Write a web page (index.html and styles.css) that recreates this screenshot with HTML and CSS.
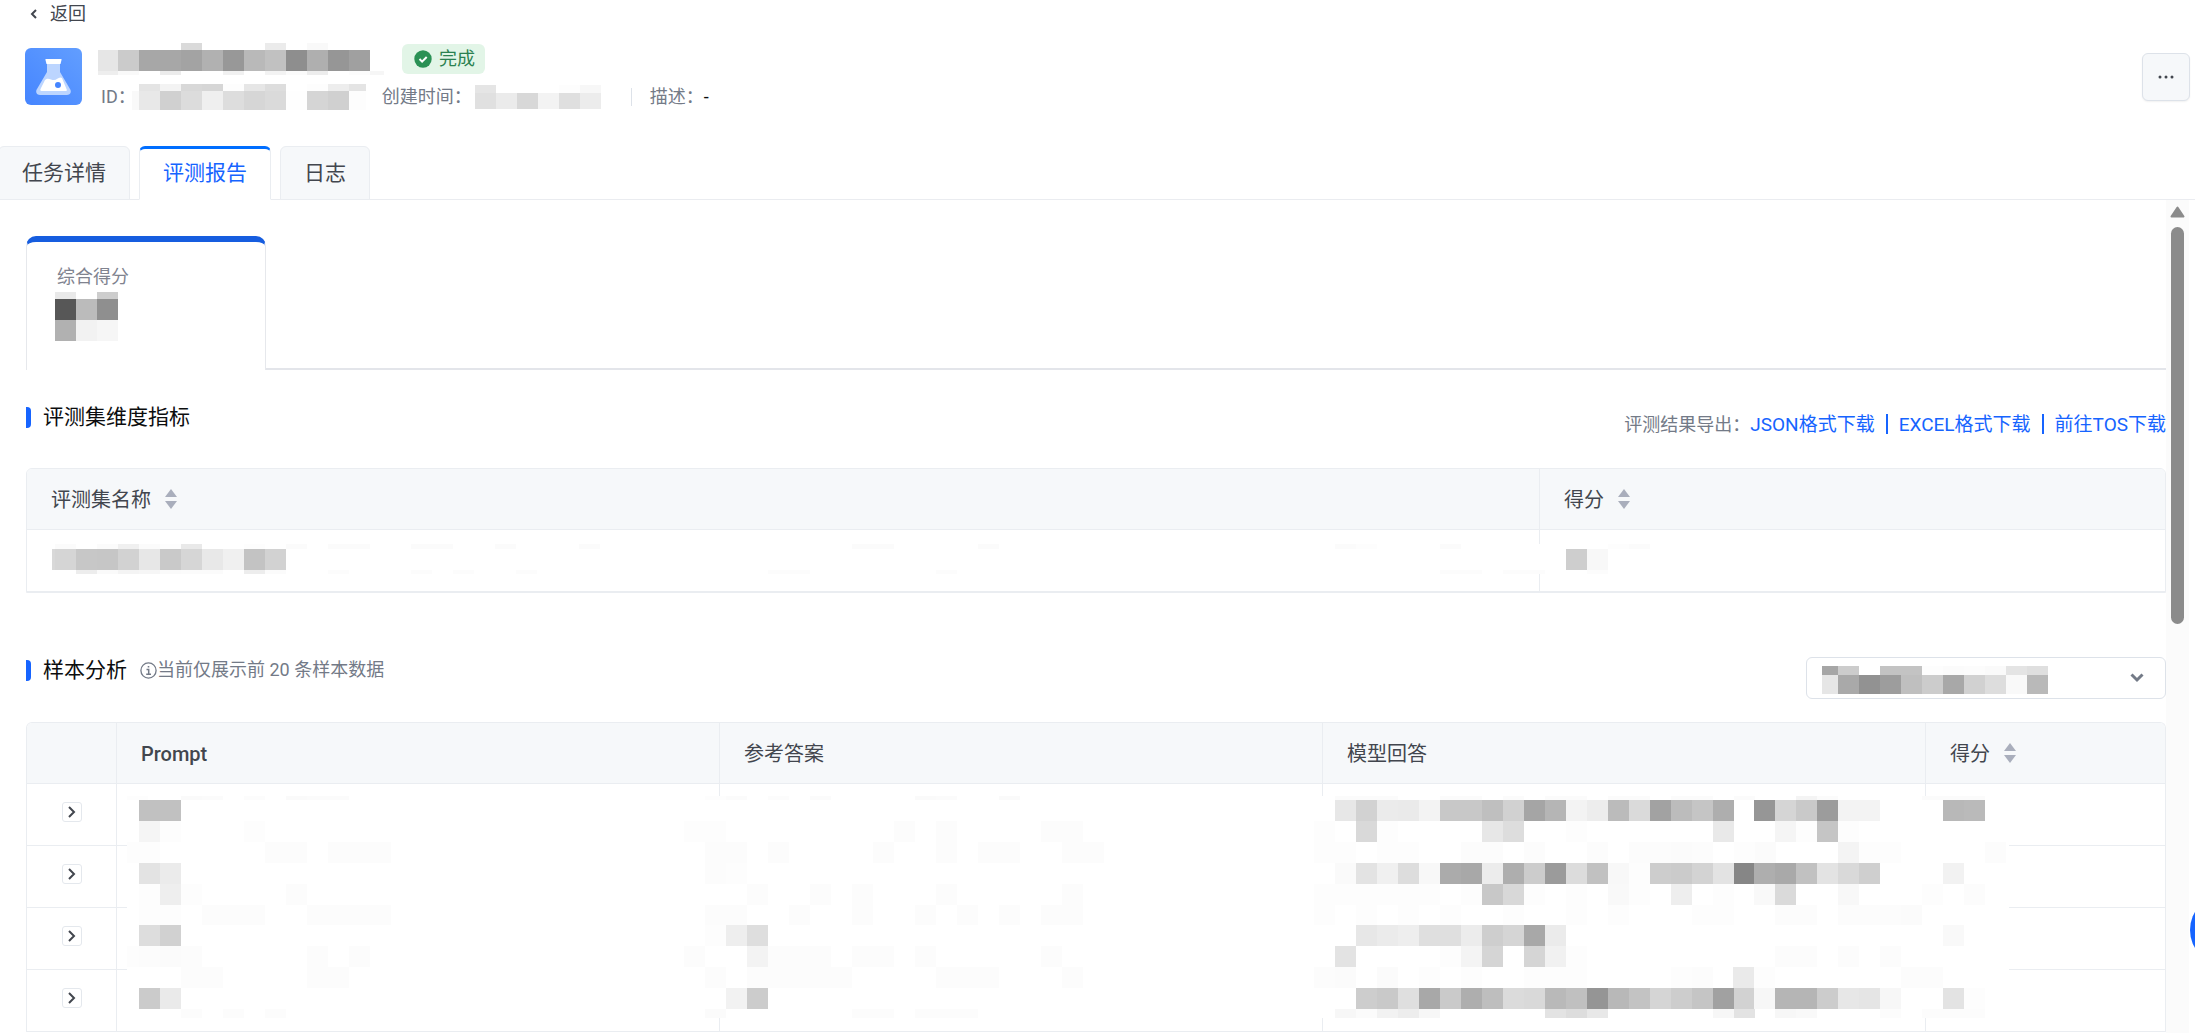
FILE: index.html
```
<!DOCTYPE html>
<html lang="zh-CN">
<head>
    <meta charset="UTF-8">
    <meta name="viewport" content="width=device-width, initial-scale=1.0">
    <title>评测报告</title>
    <link rel="stylesheet" href="styles.css">
</head>
<body>

    <header class="header">
        <a class="back" href="#">
            <svg width="16" height="16" viewBox="0 0 16 16"><path d="M10 4L6 8l4 4" fill="none" stroke="currentColor" stroke-width="2"/></svg>
            返回
        </a>
        <div class="task">
            <svg class="task-icon" viewBox="0 0 57 57">
                <defs>
                    <linearGradient id="iconBg" x1="1" y1="0" x2="0" y2="1">
                        <stop offset="0" stop-color="#629eff"/>
                        <stop offset="1" stop-color="#4585ff"/>
                    </linearGradient>
                </defs>
                <rect width="57" height="57" rx="6" fill="url(#iconBg)"/>
                <path d="M22 15h13v9l10 17c2 3 0 6-3 6H15c-3 0-5-3-3-6l10-17z" fill="#bcd5ff"/>
                <path d="M20.500 11h16v1l-1 4h-14l-1-4z" fill="#fff"/>
                <path d="M20 32c3-3 6 0 9 0s5-4 8-2l4.500 11c1 1.500 0 2-1 2h-24c-1 0-1.500-1-1-2z" fill="#fff"/>
                <circle cx="33" cy="37" r="3" fill="#4585ff"/>
            </svg>
            <div class="task-info">
                <div class="task-title">
                    <svg class="mosaic" data-name="title" width="286" height="32" viewBox="98 42 286 32"></svg>
                    <span class="badge">
                        <svg width="18" height="18" viewBox="0 0 18 18"><circle cx="9" cy="9" r="8.700" fill="#2b9155"/><path d="M5.500 9l2.600 2.600 4.600-4.600" fill="none" stroke="#fff" stroke-width="2"/></svg>
                        完成
                    </span>
                </div>
                <div class="task-meta">
                    <span>ID：</span>
                    <svg class="mosaic id-value" data-name="id" width="234" height="26" viewBox="132 84 234 26"></svg>
                    <span>创建时间：</span>
                    <svg class="mosaic time-value" data-name="time" width="126" height="24" viewBox="474 83 126 24"></svg>
                    <span class="meta-line"></span>
                    <span>描述：</span>
                    <span class="meta-dash">-</span>
                </div>
            </div>
            <button class="more" type="button" aria-label="更多">
                <svg width="16" height="4" viewBox="0 0 16 4"><circle cx="2" cy="2" r="1.500"/><circle cx="8" cy="2" r="1.500"/><circle cx="14" cy="2" r="1.500"/></svg>
            </button>
        </div>
        <nav class="tabs">
            <a class="tab" href="#">任务详情</a>
            <a class="tab active" href="#">评测报告</a>
            <a class="tab" href="#">日志</a>
        </nav>
    </header>

    <div class="page">
        <main class="content">
            <div class="score-tabs">
                <div class="score-card">
                    <p>综合得分</p>
                    <svg class="mosaic" data-name="score" width="63" height="49" viewBox="55 292 63 49"></svg>
                </div>
            </div>

            <section class="section">
                <h2>评测集维度指标</h2>
                <div class="export">
                    <span>评测结果导出：</span>
                    <a href="#">JSON格式下载</a>
                    <a href="#">EXCEL格式下载</a>
                    <a href="#">前往TOS下载</a>
                </div>
            </section>

            <div class="table-box">
                <table class="table dataset-table">
                    <thead>
                        <tr>
                            <th>评测集名称 <svg class="sort" viewBox="0 0 12 20"><path d="M6 0l6 8H0zM6 20l6-8H0z"/></svg></th>
                            <th class="dataset-score">得分 <svg class="sort" viewBox="0 0 12 20"><path d="M6 0l6 8H0zM6 20l6-8H0z"/></svg></th>
                        </tr>
                    </thead>
                    <tbody>
                        <tr><td></td><td></td></tr>
                    </tbody>
                </table>
                <svg class="mosaic mosaic-dataset" data-name="dataset" width="1600" height="30" viewBox="52 545 1600 30"></svg>
            </div>

            <section class="section section-samples">
                <h2>样本分析</h2>
                <p class="tip">
                    <svg width="17" height="17" viewBox="0 0 17 17" fill="none" stroke="currentColor"><circle cx="8.500" cy="8.500" r="7.600" stroke-width="1.300"/><path d="M6.500 7.500h2.200v4.500M6.200 12.300h4.800M7.700 4.800h1.600" stroke-width="1.500"/></svg>当前仅展示前 20 条样本数据
                </p>
                <div class="picker">
                    <select aria-label="评测集"><option></option></select>
                    <svg class="mosaic picker-value" data-name="picker" width="226" height="28" viewBox="1822 666 226 28"></svg>
                    <svg class="picker-arrow" width="14" height="10" viewBox="0 0 14 10"><path d="M1.500 1.500L7 7l5.500-5.500" fill="none" stroke="#737a87" stroke-width="3"/></svg>
                </div>
            </section>

            <div class="table-box">
                <table class="table sample-table">
                    <thead>
                        <tr>
                            <th class="col-expand"></th>
                            <th class="latin">Prompt</th>
                            <th>参考答案</th>
                            <th>模型回答</th>
                            <th class="col-score">得分 <svg class="sort" viewBox="0 0 12 20"><path d="M6 0l6 8H0zM6 20l6-8H0z"/></svg></th>
                        </tr>
                    </thead>
                    <tbody>
                        <tr><td><button class="expand" type="button" aria-label="展开"><svg viewBox="0 0 8 12"><path d="M1 1l5 5-5 5"/></svg></button></td><td></td><td></td><td></td><td></td></tr>
                        <tr><td><button class="expand" type="button" aria-label="展开"><svg viewBox="0 0 8 12"><path d="M1 1l5 5-5 5"/></svg></button></td><td></td><td></td><td></td><td></td></tr>
                        <tr><td><button class="expand" type="button" aria-label="展开"><svg viewBox="0 0 8 12"><path d="M1 1l5 5-5 5"/></svg></button></td><td></td><td></td><td></td><td></td></tr>
                        <tr><td><button class="expand" type="button" aria-label="展开"><svg viewBox="0 0 8 12"><path d="M1 1l5 5-5 5"/></svg></button></td><td></td><td></td><td></td><td></td></tr>
                    </tbody>
                </table>
                <svg class="mosaic mosaic-samples" data-name="samples" width="1882" height="222" viewBox="127 796 1882 222"></svg>
            </div>
        </main>

        <div class="scrollbar">
            <svg width="15" height="12" viewBox="0 0 15 12"><path d="M7.500 1.500L13.500 10.500H1.500z" fill="#8b8b8b" stroke="#8b8b8b" stroke-width="2" stroke-linejoin="round"/></svg>
            <div class="thumb"></div>
        </div>
    </div>

    <button class="float-btn" type="button" aria-label="帮助"></button>

    <script src="mosaic.js"></script>
</body>
</html>
```
FILE: mosaic.js
```
// Строка мозаики: [y, высота, {x: 'серые клетки по два hex-знака, -- пусто'}]
const CELL = 21;
const mosaics = {
    title: [
        [42, 7, {181: 'da', 265: 'eb', 307: 'f9'}],
        [49, 21, {97: 'e6cba7a7a3b198b9c18eaf96a0'}],
        [70, 4, {97: 'eef9--ec----f1--f3fbed--fcf6'}]
    ],
    id: [
        [84, 7, {139: 'e4f3d8d6fde6dd', 307: 'fdede4'}],
        [91, 19, {118: 'f9e8d0dcefddd6dafe', 307: 'd5d0fd'}]
    ],
    time: [
        [83, 8, {474: 'e5', 558: 'fdf7'}],
        [91, 16, {474: 'e0ebd8f3dfec'}]
    ],
    score: [
        [292, 7, {55: 'e9--cd'}],
        [299, 21, {55: '57bb8f'}],
        [320, 21, {55: 'b1f2f6'}]
    ],
    dataset: [
        [545, 5, {55: 'fb--fbf0fbfde9', 244: 'fd', 286: 'fb', 328: 'fbfb', 411: 'fbfb', 495: 'fb', 579: 'fb', 852: 'fbfb', 978: 'fb', 1335: 'fbfd', 1440: 'fb', 1608: 'fdfb'}],
        [550, 21, {34: 'd8d5c7c6d2e7c9d6e8f0c3d2', 1566: 'cef8'}],
        [571, 4, {76: 'edfaf4f6fafbfb--edfb', 328: 'fc', 411: 'fc', 453: 'fc', 516: 'fc', 768: 'fcfc', 936: 'fc', 1440: 'fcfc', 1503: 'fcfc', 1587: 'fc'}]
    ],
    picker: [
        [666, 9, {1817: 'a6cc--c3c3fdfbfcfae4df'}],
        [675, 19, {1817: 'e6a9929dbfcca8d1ddf9b9'}]
    ],
    samples: [
        [796, 4, {127: 'fd', 181: 'fafb', 244: 'fc', 286: 'fafbfb', 705: 'fdfb', 768: 'fc', 810: 'fb', 915: 'fafb', 999: 'fa', 1335: 'fbfbfb', 1440: 'fbfb', 1503: 'fb', 1545: 'fbfb', 1608: 'fbfb--fbfb--fb', 1796: 'f4fb', 1922: 'fbfbfb'}],
        [800, 21, {139: 'c1c1', 1335: 'e7d2ebeaf3c8c8bfd1a5b5f3edbbdaa2bcc5ae', 1754: '96d5c99cf3f3', 1943: 'b8ba'}],
        [821, 21, {139: 'f5fd', 244: 'fd', 684: 'fdfd', 894: 'fc', 936: 'fc', 1041: 'fcfc', 1314: 'fd', 1356: 'd9fd', 1482: 'e7dd', 1566: 'fd', 1713: 'e9', 1775: 'f5fdc5fd'}],
        [842, 21, {127: 'fd', 139: 'fd', 265: 'fcfc', 328: 'fcfcfc', 705: 'fcfc', 768: 'fc', 873: 'fc', 936: 'fc', 978: 'fcfc', 1062: 'fcfc', 1314: 'fdfd--fdfd----fcfc--fc----fc--fcfcfbfc--fdfb', 1838: 'f4fdfd', 1985: 'fc'}],
        [863, 21, {139: 'e3eb', 705: 'fcfd', 1335: 'fae3f0ddf8aba8ecaecc9bdcc1f8fdcdcbd3e386', 1754: 'aea9c1e3d9cf', 1943: 'f2'}],
        [884, 21, {139: 'fdeefd', 286: 'fc', 747: 'fc', 810: 'fc', 852: 'fc', 936: 'fc', 1062: 'fc', 1314: 'fdfdfdfdfdfd--fdc8d8fd--fd--f9fd--ee--fd', 1754: 'f9da', 1838: 'f8', 1922: 'fd', 1964: 'fc'}],
        [905, 20, {139: 'fdfd', 202: 'fcfcfc', 307: 'fcfcfcfc', 705: 'fcfc', 789: 'fc', 852: 'fc', 915: 'fc', 957: 'fc', 999: 'fc', 1041: 'fcfc', 1314: 'fd--fd--fd--fd', 1503: 'fd', 1566: 'fd', 1608: 'fd', 1692: 'fdfd', 1775: 'fcfc', 1838: 'fcfcfcfb'}],
        [925, 21, {139: 'ddd1', 705: 'fdeede', 1356: 'e7ebeedfdfecced5a8eb', 1943: 'f9'}],
        [946, 21, {127: 'fd', 139: 'fcfbfc', 307: 'fc', 349: 'fc', 684: 'fc', 747: 'f3fcfcfc', 852: 'fcfc', 915: 'fc', 1041: 'fc', 1335: 'e3', 1440: 'fdf4d5--d5f1fd', 1775: 'fcfc', 1838: 'fc', 1880: 'fc'}],
        [967, 21, {181: 'fcfc', 307: 'fcfc', 705: 'fc', 747: 'fcfcfcfcfc', 936: 'fcfcfc', 1062: 'fc', 1314: 'fcfb--fb--fd--fd', 1524: 'fdfdfd', 1671: 'fdfc', 1733: 'eafd', 1901: 'fcfc'}],
        [988, 21, {139: 'cbea', 726: 'f2cc', 1356: 'cdc9dfa8caaebedbd9b9c095b8c3d5cdc5a1d2', 1754: 'f7b5b5cce7e5f7', 1943: 'e3fd'}],
        [1009, 9, {181: 'fc--fc--fc', 705: 'fb', 852: 'fcfc', 915: 'fcfcfc', 1335: 'f7fbf2edf7', 1545: 'e3dde8', 1713: 'f7e3', 1775: 'f7f9', 1880: 'fc', 1922: 'fcfcfc'}]
    ]
};

document.querySelectorAll('.mosaic').forEach(svg => {
    let html = '';
    mosaics[svg.dataset.name].forEach(([y, h, parts]) => {
        for (const x in parts) {
            const cells = parts[x].match(/../g);
            cells.forEach((c, i) => {
                if (c === '--') return;
                html += `<rect x="${+x + i * CELL}" y="${y}" width="${CELL}" height="${h}" fill="#${c + c + c}"/>`;
            });
        }
    });
    svg.innerHTML = html;
});
```
FILE: styles.css
```
* {
    box-sizing: border-box;
}
body {
    margin: 0;
    height: 100vh;
    display: flex;
    flex-direction: column;
    overflow: hidden;
    background-color: #fff;
    color: #42464e;
    font-family: Roboto, "Noto Sans CJK SC", sans-serif;
    font-size: 18px;
    line-height: 26px;
}
h2, p {
    margin: 0;
    font-weight: normal;
}
a {
    color: inherit;
    text-decoration: none;
}
button {
    padding: 0;
    cursor: pointer;
}
svg {
    display: block;
    flex: none;
}
.mosaic {
    shape-rendering: crispEdges;
}

/* Шапка */
.back {
    display: inline-flex;
    align-items: center;
    gap: 8px;
    padding-left: 26px;
    height: 28px;
}
.task {
    display: flex;
    align-items: flex-start;
    padding: 14px 5px 0 25px;
}
.task-icon {
    width: 57px;
    height: 57px;
    margin-top: 5px;
}
.task-info {
    flex: 1;
    margin-left: 16px;
}
.task-title {
    display: flex;
    align-items: center;
    gap: 18px;
}
.badge {
    display: flex;
    align-items: center;
    gap: 7px;
    height: 30px;
    padding: 0 10px 0 12px;
    border-radius: 6px;
    background-color: #e2f5e7;
    color: #2b8150;
}
.task-meta {
    display: flex;
    align-items: center;
    height: 44px;
    padding-left: 3px;
    color: #737a87;
}
.id-value {
    margin: 0 16px 0 -4px;
}
.time-value {
    margin-left: 3px;
}
.meta-line {
    width: 1px;
    height: 18px;
    margin: 0 18px 0 30px;
    background-color: #dde2e9;
}
.meta-dash {
    color: #0c0d0e;
}
.more {
    display: flex;
    align-items: center;
    justify-content: center;
    width: 48px;
    height: 48px;
    margin-top: 10px;
    border: 1px solid #dde2e9;
    border-radius: 6px;
    background-color: #f6f8fa;
    box-shadow: 0 1px 2px rgba(0, 0, 0, 0.06);
    fill: #42464e;
}

/* Вкладки */
.tabs {
    display: flex;
    gap: 9px;
    height: 81px;
    margin-left: -2px;
    align-items: flex-end;
    border-bottom: 1px solid #eaecf0;
}
.tab {
    height: 54px;
    margin-bottom: -1px;
    padding: 0 23px;
    border: 1px solid #eaedf1;
    border-radius: 6px 6px 0 0;
    background-color: #f6f8fa;
    font-size: 21px;
    line-height: 53px;
}
.tab.active {
    border-top: 3px solid #006eff;
    border-bottom-color: #fff;
    background-color: #fff;
    color: #1664ff;
    line-height: 49px;
}

.page {
    flex: 1;
    display: flex;
    min-height: 0;
    padding-right: 6px;
}
.content {
    flex: 1;
    min-width: 0;
    padding: 36px 0 0 26px;
}
.scrollbar {
    display: flex;
    flex-direction: column;
    align-items: center;
    gap: 9px;
    width: 23px;
    padding-top: 6px;
    background-color: #fbfbfb;
}
.thumb {
    width: 13px;
    height: 48%;
    border-radius: 7px;
    background-color: #8b8b8b;
}

/* Итоговый балл */
.score-tabs {
    display: flex;
    border-bottom: 2px solid #e3e5ea;
}
.score-card {
    width: 240px;
    height: 134px;
    margin-bottom: -2px;
    padding: 22px 28px 0;
    border: 1px solid #e6e8ec;
    border-top: 6px solid #165ddf;
    border-bottom: 0;
    border-radius: 10px 10px 0 0;
    background-color: #fff;
    color: #80838f;
}
.score-card p {
    margin-left: 2px;
}
.score-card .mosaic {
    margin-top: 2px;
}

/* Заголовки разделов */
.section {
    display: flex;
    align-items: flex-start;
    padding: 34px 0 30px;
}
.section h2 {
    display: flex;
    align-items: center;
    gap: 12px;
    color: #0c0d0e;
    font-size: 21px;
    line-height: 26px;
}
.section h2::before {
    content: "";
    width: 5px;
    height: 21px;
    border-radius: 0 4px 4px 0;
    background-color: #1664ff;
}
.export {
    display: flex;
    align-items: center;
    margin: 8px 0 0 auto;
    color: #737a87;
}
.export a {
    color: #1664ff;
    font-size: 19px;
}
.export a + a::before {
    content: "";
    display: inline-block;
    width: 2px;
    height: 20px;
    margin: 0 11px;
    vertical-align: -3px;
    background-color: #1664ff;
}
.section-samples {
    padding: 64px 0 23px;
}
.tip {
    display: flex;
    align-items: center;
    margin-left: 13px;
    color: #737a87;
}
.picker {
    position: relative;
    width: 360px;
    margin-left: auto;
}
.picker select {
    display: block;
    width: 100%;
    height: 42px;
    border: 1px solid #dde2e9;
    border-radius: 6px;
    background-color: #fff;
    appearance: none;
}
.picker-value {
    position: absolute;
    top: 9px;
    left: 16px;
    pointer-events: none;
}
.picker-arrow {
    position: absolute;
    top: 16px;
    right: 22px;
    pointer-events: none;
}

/* Таблицы */
.table-box {
    position: relative;
}
.table {
    width: 100%;
    table-layout: fixed;
    border-collapse: separate;
    border-spacing: 0;
    border: 1px solid #eaedf1;
    border-radius: 6px 6px 0 0;
}
.table th {
    height: 61px;
    padding: 2px 24px 0;
    border-bottom: 1px solid #eaedf1;
    background-color: #f6f8fa;
    font-size: 20px;
    font-weight: normal;
    text-align: left;
}
.table .latin {
    font-weight: 500;
}
.table th:first-child {
    border-top-left-radius: 5px;
}
.table th:last-child {
    border-top-right-radius: 5px;
}
.table td {
    height: 62px;
    padding: 0;
    border-bottom: 1px solid #eaedf1;
}
.table th + th, .table td + td {
    border-left: 1px solid #eaedf1;
}
.sort {
    display: inline-block;
    width: 12px;
    height: 20px;
    margin-left: 9px;
    vertical-align: -2px;
    fill: #a9aebc;
}
.dataset-score {
    width: 626px;
}
.col-expand {
    width: 89px;
}
.col-score {
    width: 240px;
}
.sample-table {
    border-bottom: 0;
}
.sample-table td {
    vertical-align: top;
    padding-top: 18px;
}
.expand {
    display: flex;
    align-items: center;
    justify-content: center;
    width: 20px;
    height: 20px;
    margin: 0 auto;
    border: 1px solid #e4e8ed;
    border-radius: 3px;
    background-color: #fff;
}
.expand svg {
    width: 8px;
    height: 12px;
    fill: none;
    stroke: #42464e;
    stroke-width: 2;
}
/* Мозаика лежит поверх линий таблицы */
.mosaic-dataset {
    position: absolute;
    top: 76px;
    left: 26px;
    background-color: #fff;
}
.mosaic-samples {
    position: absolute;
    top: 74px;
    left: 101px;
    background-color: #fff;
}

.float-btn {
    position: fixed;
    right: -67px;
    bottom: 67px;
    width: 72px;
    height: 72px;
    border: 0;
    border-radius: 50%;
    background-color: #1664ff;
}
```
